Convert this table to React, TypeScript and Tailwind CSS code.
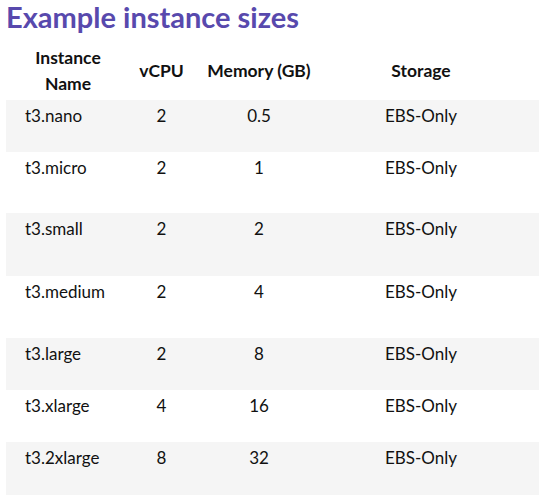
import React from "react";

const rows = [
  { name: "t3.nano", cpu: "2", mem: "0.5", h: "h-[52px]", gray: true },
  { name: "t3.micro", cpu: "2", mem: "1", h: "h-[61px]", gray: false },
  { name: "t3.small", cpu: "2", mem: "2", h: "h-[63px]", gray: true },
  { name: "t3.medium", cpu: "2", mem: "4", h: "h-[62px]", gray: false },
  { name: "t3.large", cpu: "2", mem: "8", h: "h-[52px]", gray: true },
  { name: "t3.xlarge", cpu: "4", mem: "16", h: "h-[52px]", gray: false },
  { name: "t3.2xlarge", cpu: "8", mem: "32", h: "h-[53px]", gray: true },
];

const cols = "grid grid-cols-[124px_63px_132px_214px]";

export default function App() {
  return (
    <div className="w-[546px] h-[496px] bg-white overflow-hidden font-['Lato',sans-serif] text-[#111]">
      <h1 className="pl-[6px] h-[42px] text-[29px] font-bold leading-[34px] text-[#5849ad]">
        Example instance sizes
      </h1>
      <div className="ml-[6px] w-[533px]">
        <div className={`${cols} h-[58px] items-center font-bold text-[17.5px] leading-[26px]`}>
          <div className="text-center">
            Instance
            <br />
            Name
          </div>
          <div className="text-center">vCPU</div>
          <div className="text-center">Memory (GB)</div>
          <div className="text-center pr-[22px]">Storage</div>
        </div>
        {rows.map((r) => (
          <div
            key={r.name}
            className={`${cols} ${r.h} pt-[4px] text-[17px] leading-[24px] ${r.gray ? "bg-[#f5f5f5]" : "bg-white"}`}
          >
            <div className="pl-[19px]">{r.name}</div>
            <div className="text-center">{r.cpu}</div>
            <div className="text-center">{r.mem}</div>
            <div className="text-center pr-[22px]">EBS-Only</div>
          </div>
        ))}
      </div>
    </div>
  );
}
